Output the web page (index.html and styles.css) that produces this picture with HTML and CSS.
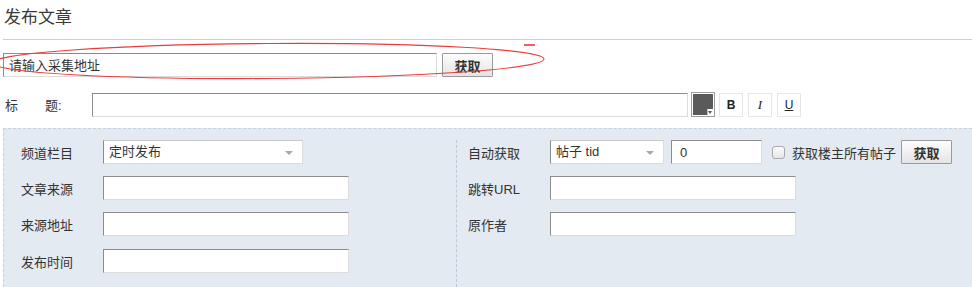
FILE: index.html
```html
<!DOCTYPE html>
<html lang="zh-CN">
<head>
<meta charset="utf-8">
<title>发布文章</title>
<link rel="stylesheet" href="styles.css">
</head>
<body>
<div class="page">
  <h1 class="title">发布文章</h1>

  <div class="fetch-row">
    <input class="txt url" type="text" value="请输入采集地址">
    <button class="btn" type="button">获取</button>
  </div>

  <div class="subject-row">
    <label class="subject-label"><span>标</span><span>题:</span></label>
    <input class="txt subject" type="text">
    <span class="color-pick"><span class="swatch"></span><span class="swatch-arrow"></span></span>
    <button class="fmt fmt-b" type="button">B</button>
    <button class="fmt fmt-i" type="button">I</button>
    <button class="fmt fmt-u" type="button">U</button>
  </div>

  <div class="panel">
    <div class="col col-left">
      <div class="row">
        <label class="lbl">频道栏目</label>
        <div class="sel sel-channel">定时发布<i class="arrow"></i></div>
      </div>
      <div class="row">
        <label class="lbl">文章来源</label>
        <input class="txt field" type="text">
      </div>
      <div class="row">
        <label class="lbl">来源地址</label>
        <input class="txt field" type="text">
      </div>
      <div class="row row-last">
        <label class="lbl">发布时间</label>
        <input class="txt field" type="text">
      </div>
    </div>
    <div class="col col-right">
      <div class="row">
        <label class="lbl">自动获取</label>
        <div class="sel sel-tid">帖子 tid<i class="arrow"></i></div>
        <input class="txt tid" type="text" value="0">
        <span class="check"></span>
        <span class="check-text">获取楼主所有帖子</span>
        <button class="btn btn-small" type="button">获取</button>
      </div>
      <div class="row">
        <label class="lbl">跳转URL</label>
        <input class="txt field" type="text">
      </div>
      <div class="row">
        <label class="lbl">原作者</label>
        <input class="txt field" type="text">
      </div>
    </div>
  </div>

  <svg class="mark" width="560" height="50" viewBox="0 0 560 50" aria-hidden="true">
    <ellipse cx="268" cy="21" rx="276" ry="17.5" fill="none" stroke="#ec3b3b" stroke-width="1.1" transform="rotate(-0.4 268 21)"/>
    <rect x="524" y="4" width="11" height="2" fill="#f06060"/>
  </svg>
</div>
</body>
</html>
```

FILE: styles.css
```css
html, body {
  margin: 0;
  padding: 0;
  background: #fff;
  overflow: hidden;
}

body {
  font-family: "Liberation Sans", "Noto Sans CJK SC", sans-serif;
  font-size: 13px;
  color: #333;
}

.page {
  position: relative;
  padding-left: 3px;
}

.title {
  margin: 0;
  height: 39px;
  padding-left: 1px;
  font-size: 17px;
  font-weight: normal;
  line-height: 35px;
  color: #3a3a3a;
  border-bottom: 1px solid #cfcfcf;
}

.txt {
  box-sizing: border-box;
  height: 24px;
  margin: 0;
  padding: 0 5px;
  font-family: inherit;
  font-size: 13px;
  color: #333;
  background: #fff;
  border: 1px solid;
  border-color: #8c8c8c #dcdcdc #dcdcdc #8c8c8c;
  outline: none;
}

.btn {
  box-sizing: border-box;
  height: 24px;
  margin: 0;
  padding: 0;
  font-family: inherit;
  font-size: 13px;
  font-weight: bold;
  color: #333;
  background: linear-gradient(#fdfdfd, #e4e4e4);
  border: 1px solid #9a9a9a;
  border-radius: 1px;
}

.fetch-row {
  display: flex;
  align-items: center;
  gap: 5px;
  margin-top: 12px;
}

.url {
  width: 434px;
}

.fetch-row .btn {
  width: 51px;
  margin-top: 1px;
}

.subject-row {
  display: flex;
  align-items: center;
  margin-top: 15px;
}

.subject-label {
  display: flex;
  width: 89px;
  padding-left: 2px;
  box-sizing: border-box;
  gap: 27px;
  color: #333;
}

.subject {
  width: 596px;
}

.color-pick {
  position: relative;
  box-sizing: border-box;
  width: 24px;
  height: 25px;
  margin-left: 3px;
  border: 1px solid #9c9c9c;
  background: #fff;
  padding: 1px;
}

.swatch {
  display: block;
  width: 20px;
  height: 21px;
  background: #5a5a5a;
  clip-path: polygon(0 0, 100% 0, 100% 72%, 72% 72%, 72% 100%, 0 100%);
}

.swatch-arrow {
  position: absolute;
  right: 2px;
  bottom: 2px;
  width: 0;
  height: 0;
  border-left: 2px solid transparent;
  border-right: 2px solid transparent;
  border-top: 3px solid #555;
}

.fmt {
  box-sizing: border-box;
  width: 24px;
  height: 24px;
  margin: 0 0 0 5px;
  padding: 0;
  background: #fff;
  border: 1px solid #e6e6e6;
  color: #222;
  font-size: 12px;
  line-height: 22px;
}

.color-pick + .fmt {
  margin-left: 4px;
}

.fmt-b {
  font-family: "Liberation Sans", sans-serif;
  font-weight: bold;
}

.fmt-i {
  font-family: "Liberation Serif", serif;
  font-style: italic;
  font-size: 13px;
}

.fmt-u {
  font-family: "Liberation Sans", sans-serif;
  text-decoration: underline;
}

.panel {
  display: flex;
  margin-top: 11px;
  padding: 11px 0 14px;
  background: #e3eaf1;
  border-top: 1px dashed #c3d2dd;
  border-left: 1px dashed #c3d2dd;
}

.col {
  display: flex;
  flex-direction: column;
  gap: 12px;
}

.col-left {
  width: 452px;
  box-sizing: border-box;
  padding-left: 17px;
}

.col-right {
  flex: 1;
  padding-left: 11px;
  border-left: 1px dashed #bfc9d1;
  margin-bottom: -14px;
  padding-bottom: 14px;
}

.row {
  display: flex;
  align-items: center;
  height: 24px;
}

.row-last {
  margin-top: 1px;
}

.lbl {
  width: 82px;
  flex: none;
  color: #333;
}

.field {
  width: 246px;
}

.sel {
  position: relative;
  box-sizing: border-box;
  height: 24px;
  padding-left: 5px;
  line-height: 22px;
  background: #fff;
  border: 1px solid;
  border-color: #c8c8c8 #dcdcdc #dcdcdc #8c8c8c;
  color: #333;
}

.sel-channel {
  width: 200px;
}

.sel-tid {
  width: 114px;
}

.arrow {
  position: absolute;
  right: 9px;
  top: 10px;
  width: 0;
  height: 0;
  border-left: 4px solid transparent;
  border-right: 4px solid transparent;
  border-top: 4px solid #a8a8a8;
}

.tid {
  width: 91px;
  margin-left: 7px;
  padding-left: 8px;
}

.check {
  box-sizing: border-box;
  width: 13px;
  height: 13px;
  margin-left: 10px;
  border: 1px solid #a9a9a9;
  border-radius: 3px;
  background: linear-gradient(#fbfbfb, #e6e6e6);
}

.check-text {
  margin-left: 7px;
  color: #333;
}

.btn-small {
  width: 51px;
  margin-left: 5px;
}

.mark {
  position: absolute;
  left: 0;
  top: 40px;
  overflow: visible;
  pointer-events: none;
}
```
